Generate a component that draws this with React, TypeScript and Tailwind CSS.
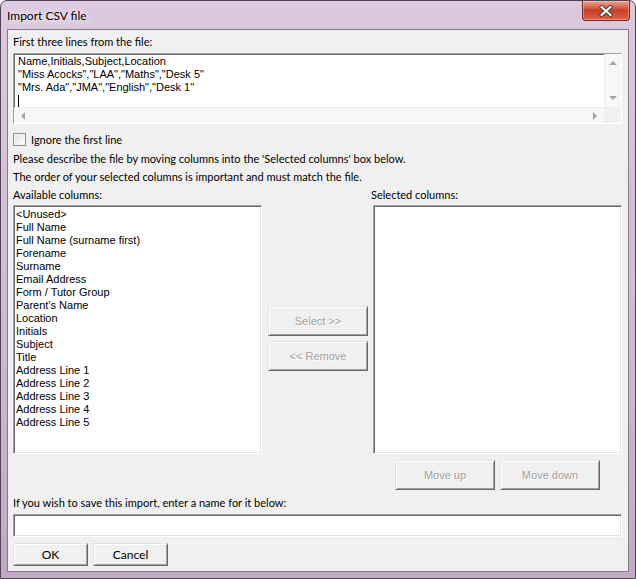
const ui = "[font-family:Lato,'Noto_Sans',sans-serif]";
const ms = "[font-family:'Liberation_Sans',Arial,sans-serif]";

const sunken =
  "border border-t-[#a0a0a0] border-l-[#a0a0a0] border-r-white border-b-white shadow-[inset_1px_1px_0_#696969,inset_-1px_-1px_0_#e3e3e3]";
const raised =
  "border border-t-[#e3e3e3] border-l-[#e3e3e3] border-r-[#696969] border-b-[#696969] shadow-[inset_1px_1px_0_#fff,inset_-1px_-1px_0_#a0a0a0] bg-[#f0f0f0]";

const available = [
  "<Unused>",
  "Full Name",
  "Full Name (surname first)",
  "Forename",
  "Surname",
  "Email Address",
  "Form / Tutor Group",
  "Parent's Name",
  "Location",
  "Initials",
  "Subject",
  "Title",
  "Address Line 1",
  "Address Line 2",
  "Address Line 3",
  "Address Line 4",
  "Address Line 5",
];

const preview = [
  "Name,Initials,Subject,Location",
  '"Miss Acocks","LAA","Maths","Desk 5"',
  '"Mrs. Ada","JMA","English","Desk 1"',
];

function Arrow({ dir }: { dir: "up" | "down" | "left" | "right" }) {
  const pts = {
    up: "0,4 4,0 8,4",
    down: "0,0 4,4 8,0",
    left: "4,0 0,4 4,8",
    right: "0,0 4,4 0,8",
  }[dir];
  const vb = dir === "up" || dir === "down" ? "0 0 8 4" : "0 0 4 8";
  const size = dir === "up" || dir === "down" ? "w-[8px] h-[4px]" : "w-[4px] h-[8px]";
  return (
    <svg viewBox={vb} className={size}>
      <polygon points={pts} fill="#a3a3a3" />
    </svg>
  );
}

function Btn({ label, disabled, w, h }: { label: string; disabled?: boolean; w: string; h: string }) {
  return (
    <div
      className={`${raised} ${w} ${h} flex items-center justify-center text-[11px] ${
        disabled ? `${ms} text-[#a0a0a0] [text-shadow:1px_1px_0_#fff]` : `${ui} text-[12px] text-black`
      }`}
    >
      {label}
    </div>
  );
}

function CloseButton() {
  return (
    <div className="mr-[5px] w-[48px] h-[20px] rounded-b-[4px] border border-t-0 border-[#6e2a20] bg-gradient-to-b from-[#eba594] via-[#c83c24] to-[#db6448] shadow-[inset_0_0_0_1px_rgba(255,210,200,0.45)] flex items-center justify-center">
      <svg viewBox="0 0 14 12" className="w-[14px] h-[12px]">
        <path d="M2.5 2 L11.5 10 M11.5 2 L2.5 10" stroke="#3a3a3a" strokeWidth="4" strokeLinecap="round" />
        <path d="M2.5 2 L11.5 10 M11.5 2 L2.5 10" stroke="#ffffff" strokeWidth="2.2" strokeLinecap="round" />
      </svg>
    </div>
  );
}

export default function App() {
  return (
    <div className="w-[636px] h-[579px] flex flex-col rounded-t-[7px] border border-[#4e4452] bg-gradient-to-b from-[#ddc9df] via-[#d1bbd5] to-[#c2a9c6] overflow-hidden">
      <div className="h-[29px] shrink-0 flex items-start justify-between">
        <div className={`${ui} pl-[6px] pt-[7px] text-[12px] leading-[16px] text-black [text-shadow:0_0_6px_#fff,0_0_10px_#fff]`}>
          Import CSV file
        </div>
        <CloseButton />
      </div>

      <div className="flex-1 flex px-[7px] pb-[7px]">
        <div className="flex-1 flex flex-col bg-[#f0f0f0] ring-1 ring-[#8a7890] pl-[5px] pr-[6px] pt-[4px]">
          <div className={`${ui} text-[11px] leading-[15px] h-[15px] text-black`}>First three lines from the file:</div>

          <div className={`${sunken} mt-[4px] h-[71px] flex flex-col bg-white`}>
            <div className="flex-1 flex">
              <div className={`${ms} flex-1 pl-[4px] pt-[1px] text-[11px] leading-[13px] text-black whitespace-pre`}>
                {preview.map((l) => (
                  <div key={l} className="h-[13px]">{l}</div>
                ))}
                <div className="h-[13px] flex items-center">
                  <div className="w-px h-[12px] bg-black" />
                </div>
              </div>
              <div className="w-[17px] bg-[#f7f7f7] border-l border-[#ececec] flex flex-col items-center justify-between py-[7px]">
                <Arrow dir="up" />
                <Arrow dir="down" />
              </div>
            </div>
            <div className="h-[17px] flex">
              <div className="flex-1 bg-[#f7f7f7] border-t border-[#ececec] flex items-center justify-between px-[7px]">
                <Arrow dir="left" />
                <Arrow dir="right" />
              </div>
              <div className="w-[17px] bg-[#f0f0f0]" />
            </div>
          </div>

          <div className="mt-[8px] h-[15px] flex items-center">
            <div className="w-[13px] h-[13px] border border-[#8e8f8f] bg-gradient-to-br from-[#dedede] to-white shadow-[inset_0_0_0_1px_#f4f4f4]" />
            <span className={`${ui} ml-[5px] text-[11px] leading-[15px] text-black`}>Ignore the first line</span>
          </div>

          <div className={`${ui} mt-[4px] h-[15px] text-[11px] leading-[15px] text-black`}>
            Please describe the file by moving columns into the 'Selected columns' box below.
          </div>
          <div className={`${ui} mt-[3px] h-[15px] text-[11px] leading-[15px] text-black`}>
            The order of your selected columns is important and must match the file.
          </div>

          <div className={`${ui} mt-[3px] h-[15px] flex text-[11px] leading-[15px] text-black`}>
            <div className="w-[359px]">Available columns:</div>
            <div className="-ml-px">Selected columns:</div>
          </div>

          <div className="mt-[3px] h-[249px] flex">
            <div className={`${sunken} w-[249px] bg-white pl-[2px] pt-[2px] ${ms} text-[11px] leading-[13px] text-black`}>
              {available.map((c) => (
                <div key={c} className="h-[13px] whitespace-pre">{c}</div>
              ))}
            </div>
            <div className="w-[111px] pl-[6px] pt-[101px] flex flex-col gap-[5px]">
              <Btn label="Select >>" disabled w="w-[100px]" h="h-[30px]" />
              <Btn label="<< Remove" disabled w="w-[100px]" h="h-[30px]" />
            </div>
            <div className={`${sunken} w-[249px] bg-white`} />
          </div>

          <div className="mt-[6px] h-[30px] flex justify-end gap-[5px] pr-[22px]">
            <Btn label="Move up" disabled w="w-[100px]" h="h-[30px]" />
            <Btn label="Move down" disabled w="w-[100px]" h="h-[30px]" />
          </div>

          <div className={`${ui} mt-[5px] h-[15px] text-[11px] leading-[15px] text-black`}>
            If you wish to save this import, enter a name for it below:
          </div>

          <div className={`${sunken} mt-[4px] h-[23px] bg-white`} />

          <div className="mt-[6px] h-[23px] flex gap-[5px]">
            <Btn label="OK" w="w-[75px]" h="h-[23px]" />
            <Btn label="Cancel" w="w-[75px]" h="h-[23px]" />
          </div>
        </div>
      </div>
    </div>
  );
}
